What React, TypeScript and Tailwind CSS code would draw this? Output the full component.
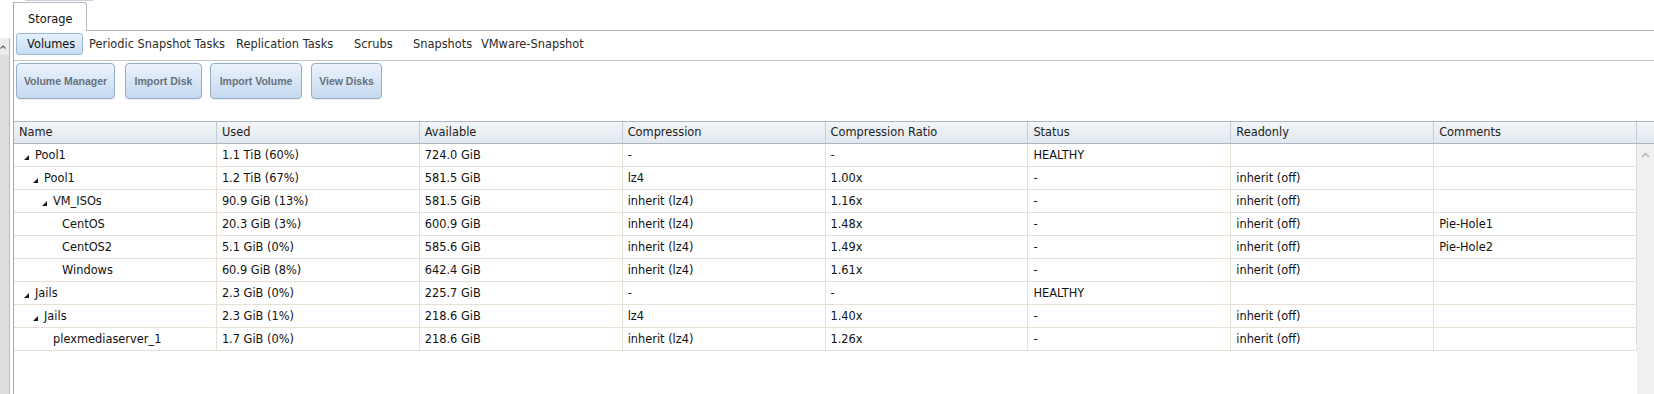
import React from "react";

type Row = {
  level: number;
  exp: boolean;
  name: string;
  used: string;
  avail: string;
  comp: string;
  ratio: string;
  status: string;
  ro: string;
  comm: string;
};

const rows: Row[] = [
  { level: 0, exp: true, name: "Pool1", used: "1.1 TiB (60%)", avail: "724.0 GiB", comp: "-", ratio: "-", status: "HEALTHY", ro: "", comm: "" },
  { level: 1, exp: true, name: "Pool1", used: "1.2 TiB (67%)", avail: "581.5 GiB", comp: "lz4", ratio: "1.00x", status: "-", ro: "inherit (off)", comm: "" },
  { level: 2, exp: true, name: "VM_ISOs", used: "90.9 GiB (13%)", avail: "581.5 GiB", comp: "inherit (lz4)", ratio: "1.16x", status: "-", ro: "inherit (off)", comm: "" },
  { level: 3, exp: false, name: "CentOS", used: "20.3 GiB (3%)", avail: "600.9 GiB", comp: "inherit (lz4)", ratio: "1.48x", status: "-", ro: "inherit (off)", comm: "Pie-Hole1" },
  { level: 3, exp: false, name: "CentOS2", used: "5.1 GiB (0%)", avail: "585.6 GiB", comp: "inherit (lz4)", ratio: "1.49x", status: "-", ro: "inherit (off)", comm: "Pie-Hole2" },
  { level: 3, exp: false, name: "Windows", used: "60.9 GiB (8%)", avail: "642.4 GiB", comp: "inherit (lz4)", ratio: "1.61x", status: "-", ro: "inherit (off)", comm: "" },
  { level: 0, exp: true, name: "Jails", used: "2.3 GiB (0%)", avail: "225.7 GiB", comp: "-", ratio: "-", status: "HEALTHY", ro: "", comm: "" },
  { level: 1, exp: true, name: "Jails", used: "2.3 GiB (1%)", avail: "218.6 GiB", comp: "lz4", ratio: "1.40x", status: "-", ro: "inherit (off)", comm: "" },
  { level: 2, exp: false, name: "plexmediaserver_1", used: "1.7 GiB (0%)", avail: "218.6 GiB", comp: "inherit (lz4)", ratio: "1.26x", status: "-", ro: "inherit (off)", comm: "" },
];

const headers = ["Name", "Used", "Available", "Compression", "Compression Ratio", "Status", "Readonly", "Comments"];

const indentExp = ["pl-[10px]", "pl-[19px]", "pl-[28px]", "pl-[37px]"];
const indentLeaf = ["pl-[21px]", "pl-[30px]", "pl-[39px]", "pl-[48px]"];

const subtabs = [
  { label: "Periodic Snapshot Tasks", w: "w-[147px]" },
  { label: "Replication Tasks", w: "w-[118px]" },
  { label: "Scrubs", w: "w-[59px]" },
  { label: "Snapshots", w: "w-[68px]" },
  { label: "VMware-Snapshot", w: "w-[120px]" },
];

const buttons = [
  { label: "Volume Manager", cls: "ml-[2px] w-[99px]" },
  { label: "Import Disk", cls: "ml-[10px] w-[77px]" },
  { label: "Import Volume", cls: "ml-[8px] w-[92px]" },
  { label: "View Disks", cls: "ml-[9px] w-[71px]" },
];

function Tri() {
  return (
    <svg width="5" height="5" viewBox="0 0 5 5" className="mr-[6px] mt-[3px] shrink-0">
      <polygon points="5,0 5,5 0,5" fill="#1a1a1a" />
    </svg>
  );
}

export default function App() {
  return (
    <div className="w-[1654px] h-[394px] bg-white flex overflow-hidden font-['DejaVu_Sans',Verdana,sans-serif] text-[11.4px] leading-[13px] text-[#111]">
      {/* left gutter: sliver of the navigation panel's scrollbar */}
      <div className="w-[13px] shrink-0 flex flex-col">
        <div className="h-[38px]" />
        <div className="w-[10px] flex-1 bg-[#dedede] border-r border-[#b9b9b9] flex flex-col">
          <div className="h-[17px] bg-[#ececec] flex items-center justify-start">
            <svg width="6" height="4" viewBox="0 0 6 4">
              <path d="M0.5 3.5 L3 1 L5.5 3.5" stroke="#606060" strokeWidth="1.2" fill="none" />
            </svg>
          </div>
        </div>
      </div>

      {/* main */}
      <div className="flex-1 flex flex-col min-w-0">
        <div className="h-[2px] flex">
          <div className="ml-[12px] w-[68px] h-[1px] bg-[#c9d0d8]" />
        </div>
        <div className="flex-1 flex flex-col border-l border-[#a7a7a7] min-h-0">
          {/* tab row */}
          <div className="flex h-[29px]">
            <div className="w-[73px] border-t border-r border-[#b4bac3] rounded-tr-[3px] bg-white pl-[14px] pt-[10px]">
              Storage
            </div>
            <div className="flex-1 border-b border-[#b4bac3]" />
          </div>

          {/* sub tabs */}
          <div className="h-[30px] border-b border-[#c6c6c6] flex items-start pt-[2px]">
            <div className="ml-[2px] w-[67px] h-[22px] rounded-[3px] border border-[#9db9d8] bg-gradient-to-b from-[#e6f0fb] to-[#c8ddf3] flex items-center pl-[10px] pt-[1px]">
              Volumes
            </div>
            <div className="flex h-[22px] items-center pt-[1px] ml-[6px] text-[#2a2a2a]">
              {subtabs.map((s) => (
                <div key={s.label} className={`${s.w} shrink-0`}>
                  {s.label}
                </div>
              ))}
            </div>
          </div>

          {/* action buttons */}
          <div className="h-[60px] flex items-start pt-[2px]">
            {buttons.map((b) => (
              <div
                key={b.label}
                className={`${b.cls} h-[36px] shrink-0 rounded-[4px] border border-[#93acc7] bg-gradient-to-b from-[#ebf3fc] to-[#c5d9ef] shadow-[0_1px_1px_rgba(0,0,0,0.08)] flex items-center justify-center font-['Liberation_Sans',Arial,sans-serif] font-bold text-[10.5px] text-[#66717e]`}
              >
                {b.label}
              </div>
            ))}
          </div>

          {/* grid */}
          <div className="flex-1 flex flex-col min-h-0">
            {/* header */}
            <div className="flex h-[23px] border-t border-b border-[#adb5c0] bg-gradient-to-b from-[#f3f6f9] to-[#e1e7ee]">
              <div className="w-[1623px] grid grid-cols-8">
                {headers.map((h) => (
                  <div key={h} className="border-r border-[#c5ccd5] px-[5px] flex items-center text-[#222]">
                    {h}
                  </div>
                ))}
              </div>
              <div className="flex-1" />
            </div>

            {/* body */}
            <div className="flex-1 flex min-h-0">
              <div className="w-[1623px] flex flex-col">
                {rows.map((r, i) => (
                  <div key={i} className="grid grid-cols-8 h-[23px]">
                    <div className={`border-r border-b border-[#e8e0d4] flex items-center ${r.exp ? indentExp[r.level] : indentLeaf[r.level]} pt-[1px]`}>
                      {r.exp && <Tri />}
                      <span className="whitespace-nowrap">{r.name}</span>
                    </div>
                    {[r.used, r.avail, r.comp, r.ratio, r.status, r.ro, r.comm].map((c, j) => (
                      <div key={j} className="border-r border-b border-[#e8e0d4] flex items-center px-[5px] pt-[1px] whitespace-nowrap">
                        {c}
                      </div>
                    ))}
                  </div>
                ))}
              </div>
              <div className="flex-1 bg-[#f0f0f0] flex flex-col items-center pt-[8px]">
                <svg width="9" height="6" viewBox="0 0 9 6">
                  <path d="M1 5 L4.5 1.5 L8 5" stroke="#b3b3b3" strokeWidth="1.4" fill="none" />
                </svg>
              </div>
            </div>
          </div>
        </div>
      </div>
    </div>
  );
}
